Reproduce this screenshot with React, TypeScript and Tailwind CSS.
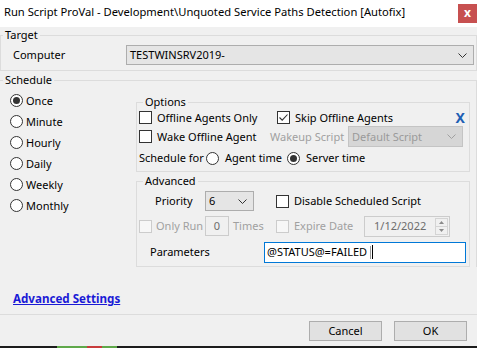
import React from "react";

const Chevron = ({ color = "#333" }: { color?: string }) => (
  <svg width="9" height="5" viewBox="0 0 9 5" className="shrink-0">
    <path d="M0.5 0.5 L4.5 4.5 L8.5 0.5" fill="none" stroke={color} strokeWidth="1" />
  </svg>
);

const CheckBox = ({ checked = false, disabled = false }: { checked?: boolean; disabled?: boolean }) => (
  <span
    className={
      disabled
        ? "flex w-[13px] h-[13px] shrink-0 items-center justify-center border border-[#cccccc] bg-[#f7f7f7]"
        : "flex w-[13px] h-[13px] shrink-0 items-center justify-center border border-[#333333] bg-white"
    }
  >
    {checked && (
      <svg width="11" height="11" viewBox="0 0 11 11">
        <path d="M1.5 5.5 L4.2 8.2 L9.5 2.5" fill="none" stroke="#333" strokeWidth="1.1" />
      </svg>
    )}
  </span>
);

const Radio = ({ checked = false }: { checked?: boolean }) => (
  <span className="flex w-[13px] h-[13px] shrink-0 items-center justify-center rounded-full border border-[#333333] bg-white">
    {checked && <span className="w-[7px] h-[7px] rounded-full bg-[#333333]" />}
  </span>
);

const Combo = ({ value, className }: { value: string; className: string }) => (
  <div className={"flex items-center border border-[#adadad] bg-[#e5e5e5] pl-[3px] pr-[6px] " + className}>
    <span>{value}</span>
    <span className="ml-auto">
      <Chevron />
    </span>
  </div>
);

const scheduleItems = ["Once", "Minute", "Hourly", "Daily", "Weekly", "Monthly"];

export default function App() {
  return (
    <div className="w-[477px] h-[348px] bg-[#f0f0f0] flex flex-col overflow-hidden whitespace-nowrap text-[11px] leading-4 text-black font-['Noto_Sans',sans-serif]">
      {/* title bar */}
      <div className="h-[27px] shrink-0 bg-white flex items-start">
        <span className="pl-[4px] pt-[4px] text-[11.2px]">
          Run Script ProVal - Development\Unquoted Service Paths Detection [Autofix]
        </span>
        <div className="ml-auto mt-[4px] w-[19px] h-[19px] bg-[#c75050] flex items-center justify-center text-white text-[12px] font-bold leading-none pb-[2px]">
          x
        </div>
      </div>

      {/* Target */}
      <fieldset className="border border-[#dcdcdc]">
        <legend className="ml-[2px] px-[2px]">Target</legend>
        <div className="flex items-center pt-[2px] pb-[5px]">
          <span className="w-[125px] pl-[12px]">Computer</span>
          <Combo value="TESTWINSRV2019-" className="flex-1 mr-[2px] h-[20px]" />
        </div>
      </fieldset>

      {/* Schedule */}
      <fieldset className="mt-[1px] border-t border-r border-[#dcdcdc]">
        <legend className="ml-[3px] px-[2px]">Schedule</legend>
        <div className="flex">
          <div className="w-[136px] pt-[2px] pl-[10px] flex flex-col">
            {scheduleItems.map((item, i) => (
              <div key={item} className="h-[21px] flex items-center gap-[3px]">
                <Radio checked={i === 0} />
                <span>{item}</span>
              </div>
            ))}
          </div>

          <div className="w-[334px] flex flex-col">
            {/* Options */}
            <fieldset className="mt-[6px] border border-[#dcdcdc]">
              <legend className="ml-[6px] px-[2px]">Options</legend>
              <div className="h-[15px] flex items-center">
                <div className="w-[140px] pl-[2px] flex items-center gap-[5px]">
                  <CheckBox />
                  <span>Offline Agents Only</span>
                </div>
                <div className="flex items-center gap-[5px]">
                  <CheckBox checked />
                  <span>Skip Offline Agents</span>
                </div>
                <span className="ml-auto mr-[4px] text-[#1e5fb4] text-[14px] font-bold">X</span>
              </div>
              <div className="h-[23px] flex items-center">
                <div className="w-[133px] pl-[2px] flex items-center gap-[5px]">
                  <CheckBox />
                  <span>Wake Offline Agent</span>
                </div>
                <span className="w-[78px] text-[#a0a0a0]">Wakeup Script</span>
                <div className="w-[115px] h-[21px] flex items-center border border-[#c4c4c4] bg-[#d6d6d6] pl-[3px] pr-[6px] text-[#9a9a9a]">
                  <span>Default Script</span>
                  <span className="ml-auto">
                    <Chevron color="#a0a0a0" />
                  </span>
                </div>
              </div>
              <div className="h-[20px] flex items-center">
                <span className="w-[68px] pl-[2px]">Schedule for</span>
                <div className="ml-[1px] w-[81px] flex items-center gap-[6px]">
                  <Radio />
                  <span>Agent time</span>
                </div>
                <div className="flex items-center gap-[6px]">
                  <Radio checked />
                  <span>Server time</span>
                </div>
              </div>
              <div className="h-[3px]" />
            </fieldset>

            {/* Advanced */}
            <fieldset className="mt-[1px] border border-[#dcdcdc]">
              <legend className="ml-[6px] px-[2px]">Advanced</legend>
              <div className="mt-[1px] h-[22px] flex items-center">
                <span className="w-[68px] pl-[18px]">Priority</span>
                <Combo value="6" className="w-[49px] h-[20px]" />
                <div className="ml-[22px] flex items-center gap-[5px]">
                  <CheckBox />
                  <span>Disable Scheduled Script</span>
                </div>
              </div>
              <div className="h-[28px] flex items-center">
                <div className="w-[68px] pl-[2px] flex items-center gap-[4px] text-[#a0a0a0]">
                  <CheckBox disabled />
                  <span>Only Run</span>
                </div>
                <div className="w-[71px] flex items-center">
                  <div className="w-[24px] h-[20px] border border-[#cccccc] bg-[#f0f0f0] flex items-center justify-center text-[#6d6d6d]">
                    0
                  </div>
                  <span className="ml-[4px] text-[#a0a0a0]">Times</span>
                </div>
                <div className="w-[88px] flex items-center gap-[5px] text-[#a0a0a0]">
                  <CheckBox disabled />
                  <span>Expire Date</span>
                </div>
                <div className="w-[86px] h-[21px] border border-[#cccccc] bg-[#f0f0f0] flex items-center pl-[9px] pr-[1px] text-[#6d6d6d]">
                  <span>1/12/2022</span>
                  <div className="ml-auto w-[13px] h-[17px] flex flex-col border border-[#d4d4d4]">
                    <div className="flex-1 flex items-center justify-center border-b border-[#d4d4d4]">
                      <svg width="5" height="3" viewBox="0 0 5 3">
                        <path d="M0 3 L2.5 0 L5 3 Z" fill="#8a8a8a" />
                      </svg>
                    </div>
                    <div className="flex-1 flex items-center justify-center">
                      <svg width="5" height="3" viewBox="0 0 5 3">
                        <path d="M0 0 L2.5 3 L5 0 Z" fill="#8a8a8a" />
                      </svg>
                    </div>
                  </div>
                </div>
              </div>
              <div className="h-[24px] flex items-center">
                <span className="w-[127px] pl-[13px]">Parameters</span>
                <div className="w-[202px] h-[21px] border border-[#0078d7] bg-white flex items-center pl-[2px]">
                  <span>@STATUS@=FAILED</span>
                  <span className="ml-[3px] w-px h-[13px] bg-[#9a9a9a]" />
                  <span className="ml-[1px] w-px h-[14px] bg-black" />
                </div>
              </div>
              <div className="h-[2px]" />
            </fieldset>
          </div>
        </div>
      </fieldset>

      {/* link */}
      <div className="mt-[24px] pl-[13px]">
        <span className="font-bold text-[11.6px] text-[#1a1ad6] underline">Advanced Settings</span>
      </div>

      {/* buttons */}
      <div className="mt-[7px] border-t border-[#dcdcdc] pt-[6px] pr-[10px] flex justify-end gap-[12px]">
        <button className="w-[73px] h-[20px] border border-[#adadad] bg-[#e1e1e1] leading-4">Cancel</button>
        <button className="w-[73px] h-[20px] border border-[#adadad] bg-[#e1e1e1] leading-4">OK</button>
      </div>

      <div className="mt-auto h-[2px] flex">
        <div className="w-[57px] bg-[#1c1c1c]" />
        <div className="w-[30px] bg-[#5fa84a]" />
        <div className="w-[15px] bg-[#c83c3c]" />
        <div className="w-[15px] bg-[#5fa84a]" />
        <div className="flex-1 bg-[#1c1c1c]" />
      </div>
    </div>
  );
}
